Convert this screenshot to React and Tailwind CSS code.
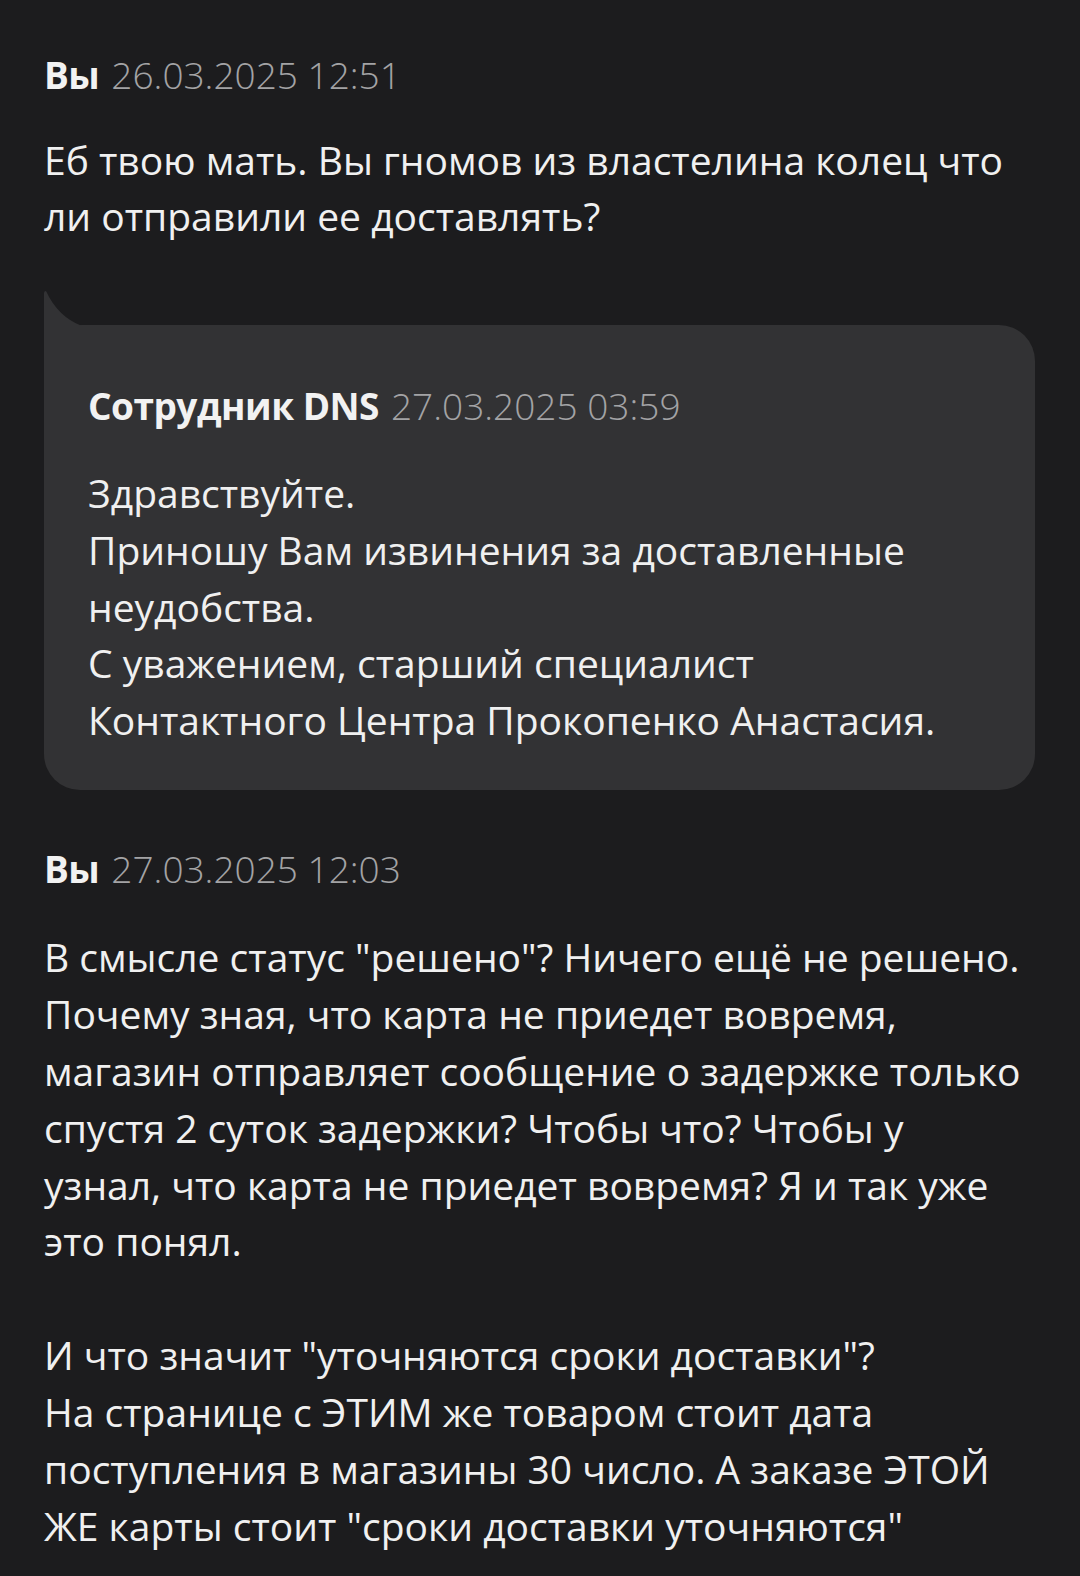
const font = { fontFamily: '"Open Sans", "Noto Sans", sans-serif' };

const Header = ({ name, date }) => (
  <div className="flex items-baseline gap-[12px] leading-[50px] whitespace-nowrap">
    <span className="text-[37px] font-bold text-[#f2f2f2] tracking-[-0.5px]">{name}</span>
    <span className="text-[37px] font-light text-[#a3a3a5]">{date}</span>
  </div>
);

const Lines = ({ lines, className }) => (
  <div className={className}>
    {lines.map((line, i) => (
      <div key={i} className="whitespace-nowrap h-[1lh]">
        {line}
      </div>
    ))}
  </div>
);

export default function App() {
  return (
    <div style={font} className="min-h-[1576px] w-full bg-[#1c1c1e] px-[44px] pt-[50px] text-[#f0f0f0]">
      {/* first message */}
      <Header name="Вы" date="26.03.2025 12:51" />
      <Lines
        className="mt-[32px] text-[39px] leading-[56px]"
        lines={[
          'Еб твою мать. Вы гномов из властелина колец что',
          'ли отправили ее доставлять?',
        ]}
      />

      {/* reply bubble */}
      <div className="relative mt-[81px] w-[991px]">
        <svg
          className="absolute left-0 top-[-34px]"
          width="40"
          height="36"
          viewBox="0 0 40 36"
        >
          <path d="M0 2 Q0 0 2 0 Q14 26 38 35 L40 36 L0 36 Z" fill="#323234" />
        </svg>
        <div className="rounded-[36px] rounded-tl-none bg-[#323234] pl-[44px] pt-[56px] pb-[41px]">
          <Header name="Сотрудник DNS" date="27.03.2025 03:59" />
          <Lines
            className="mt-[34px] text-[39px] leading-[56.8px]"
            lines={[
              'Здравствуйте.',
              'Приношу Вам извинения за доставленные',
              'неудобства.',
              'С уважением, старший специалист',
              'Контактного Центра Прокопенко Анастасия.',
            ]}
          />
        </div>
      </div>

      {/* second message */}
      <div className="mt-[54px]">
        <Header name="Вы" date="27.03.2025 12:03" />
        <Lines
          className="mt-[35px] text-[39px] leading-[56.9px]"
          lines={[
            'В смысле статус "решено"? Ничего ещё не решено.',
            'Почему зная, что карта не приедет вовремя,',
            'магазин отправляет сообщение о задержке только',
            'спустя 2 суток задержки? Чтобы что? Чтобы у',
            'узнал, что карта не приедет вовремя? Я и так уже',
            'это понял.',
            '',
            'И что значит "уточняются сроки доставки"?',
            'На странице с ЭТИМ же товаром стоит дата',
            'поступления в магазины 30 число. А заказе ЭТОЙ',
            'ЖЕ карты стоит "сроки доставки уточняются"',
          ]}
        />
      </div>
    </div>
  );
}
